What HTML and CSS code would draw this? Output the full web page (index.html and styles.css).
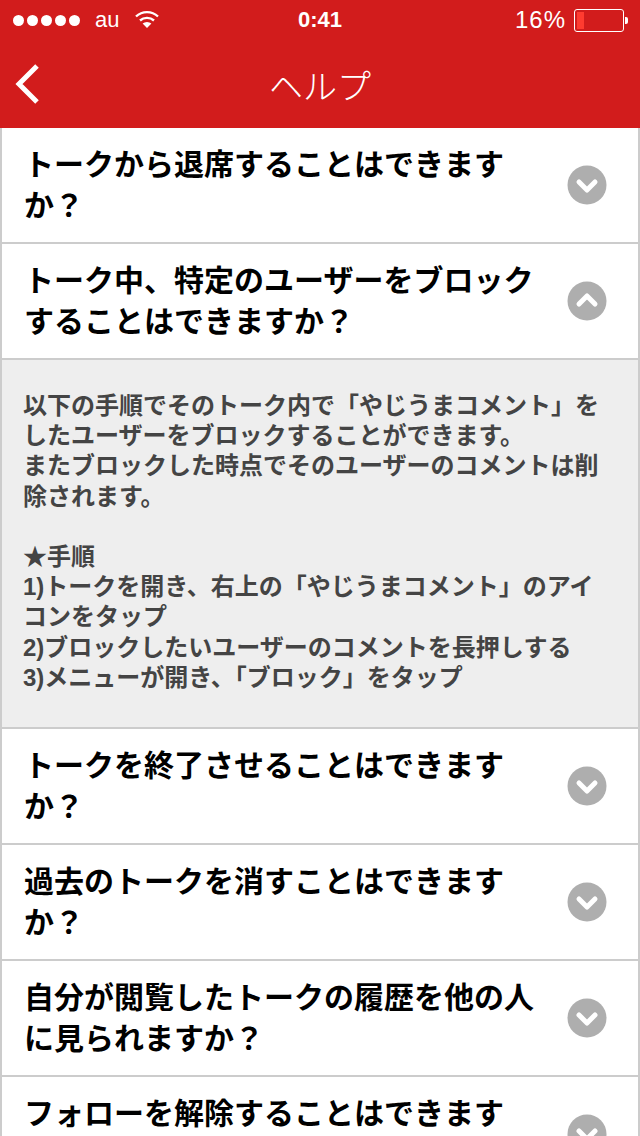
FILE: index.html
```html
<!doctype html>
<html lang="ja">
<head>
  <meta charset="UTF-8">
  <title>ヘルプ</title>
  <link rel="stylesheet" href="styles.css">
</head>
<body>
  <div id="app">
    <div class="header">
      <div class="status">
        <div class="status-left">
          <span class="dots"><i></i><i></i><i></i><i></i><i></i></span>
          <span class="carrier">au</span>
          <svg class="wifi" width="26" height="20" viewBox="0 0 26 20">
            <path d="M2 7.5a16 16 0 0 1 22 0" fill="none" stroke="#fff" stroke-width="2.4"/>
            <path d="M6 11.5a10.5 10.5 0 0 1 14 0" fill="none" stroke="#fff" stroke-width="2.4"/>
            <path d="M8.6 14.6a6.5 6.5 0 0 1 8.8 0L13 19z" fill="#fff"/>
          </svg>
        </div>
        <div class="clock">0:41</div>
        <div class="status-right">
          <span class="percent">16%</span>
          <span class="battery"><span class="battery-level"></span></span>
          <span class="battery-tip"></span>
        </div>
      </div>
      <div class="navbar">
        <svg class="back" width="30" height="44" viewBox="0 0 30 44">
          <path d="M25 4L7 22l18 18" fill="none" stroke="#fff" stroke-width="5"/>
        </svg>
        <div class="title">ヘルプ</div>
      </div>
    </div>

    <div class="row">
      <div class="question">トークから退席することはできますか？</div>
      <svg class="toggle" width="40" height="40" viewBox="0 0 40 40"><circle cx="20" cy="20" r="19.5" fill="#aeaeae"/><path d="M12 17l8 8 8-8" fill="none" stroke="#fff" stroke-width="5" stroke-linecap="round" stroke-linejoin="round"/></svg>
    </div>
    <div class="row">
      <div class="question">トーク中、特定のユーザーをブロックすることはできますか？</div>
      <svg class="toggle" width="40" height="40" viewBox="0 0 40 40"><circle cx="20" cy="20" r="19.5" fill="#aeaeae"/><path d="M12 23l8-8 8 8" fill="none" stroke="#fff" stroke-width="5" stroke-linecap="round" stroke-linejoin="round"/></svg>
    </div>
    <div class="answer">以下の手順でそのトーク内で「やじうまコメント」をしたユーザーをブロックすることができます。
またブロックした時点でそのユーザーのコメントは削除されます。

★手順
1)トークを開き、右上の「やじうまコメント」のアイコンをタップ
2)ブロックしたいユーザーのコメントを長押しする
3)メニューが開き、「ブロック」をタップ</div>
    <div class="row">
      <div class="question">トークを終了させることはできますか？</div>
      <svg class="toggle" width="40" height="40" viewBox="0 0 40 40"><circle cx="20" cy="20" r="19.5" fill="#aeaeae"/><path d="M12 17l8 8 8-8" fill="none" stroke="#fff" stroke-width="5" stroke-linecap="round" stroke-linejoin="round"/></svg>
    </div>
    <div class="row">
      <div class="question">過去のトークを消すことはできますか？</div>
      <svg class="toggle" width="40" height="40" viewBox="0 0 40 40"><circle cx="20" cy="20" r="19.5" fill="#aeaeae"/><path d="M12 17l8 8 8-8" fill="none" stroke="#fff" stroke-width="5" stroke-linecap="round" stroke-linejoin="round"/></svg>
    </div>
    <div class="row">
      <div class="question">自分が閲覧したトークの履歴を他の人に見られますか？</div>
      <svg class="toggle" width="40" height="40" viewBox="0 0 40 40"><circle cx="20" cy="20" r="19.5" fill="#aeaeae"/><path d="M12 17l8 8 8-8" fill="none" stroke="#fff" stroke-width="5" stroke-linecap="round" stroke-linejoin="round"/></svg>
    </div>
    <div class="row">
      <div class="question">フォローを解除することはできますか？</div>
      <svg class="toggle" width="40" height="40" viewBox="0 0 40 40"><circle cx="20" cy="20" r="19.5" fill="#aeaeae"/><path d="M12 17l8 8 8-8" fill="none" stroke="#fff" stroke-width="5" stroke-linecap="round" stroke-linejoin="round"/></svg>
    </div>
  </div>
</body>
</html>
```

FILE: styles.css
```css
html, body {
    margin: 0;
    height: 1136px;
    overflow: hidden;
}

body {
    background: #fff;
    font-family: "Liberation Sans", "Noto Sans CJK JP", sans-serif;
}

#app {
    width: 640px;
    height: 1136px;
    overflow: hidden;
}

.header {
    height: 128px;
    background: #d21c1c;
    color: #fff;
}

.status {
    height: 40px;
    display: flex;
    align-items: center;
    justify-content: space-between;
    padding: 0 12px 0 13px;
    position: relative;
}

.status-left, .status-right {
    display: flex;
    align-items: center;
}

.dots {
    display: flex;
    gap: 3px;
}

.dots i {
    width: 11px;
    height: 11px;
    border-radius: 50%;
    background: #fff;
}

.carrier {
    font-size: 22px;
    margin-left: 15px;
}

.wifi {
    margin-left: 15px;
    margin-top: -2px;
}

.clock {
    position: absolute;
    left: 0;
    right: 0;
    text-align: center;
    font-size: 22px;
    font-weight: bold;
}

.percent {
    font-size: 24px;
    letter-spacing: 1px;
}

.battery {
    width: 44px;
    height: 17px;
    margin-left: 8px;
    border: 1px solid #fff;
    border-radius: 3px;
    padding: 2px;
}

.battery-level {
    display: block;
    width: 7px;
    height: 100%;
    background: #ff3b30;
}

.battery-tip {
    width: 3px;
    height: 7px;
    margin-left: 1px;
    background: #fff;
    border-radius: 0 2px 2px 0;
}

.navbar {
    height: 88px;
    display: flex;
    align-items: center;
    justify-content: center;
    position: relative;
}

.back {
    position: absolute;
    left: 12px;
    top: 22px;
}

.title {
    font-size: 34px;
    font-weight: 300;
}

.row {
    height: 114px;
    box-sizing: content-box;
    display: flex;
    align-items: center;
    justify-content: space-between;
    padding: 0 31px 0 22px;
    border-bottom: 2px solid #cccccc;
    border-left: 2px solid #cccccc;
    border-right: 2px solid #cccccc;
}

.question {
    width: 512px;
    font-size: 30px;
    line-height: 41px;
    font-weight: bold;
    color: #000;
}

.toggle {
    flex: none;
}

.answer {
    height: 369px;
    padding-top: 0;
    padding: 31px 30px 0 21px;
    background: #eeeeee;
    border-left: 2px solid #cccccc;
    border-right: 2px solid #cccccc;
    border-bottom: 2px solid #cccccc;
    box-sizing: border-box;
    font-size: 24px;
    line-height: 30.2px;
    font-weight: bold;
    color: #444;
    white-space: pre-line;
}
```
